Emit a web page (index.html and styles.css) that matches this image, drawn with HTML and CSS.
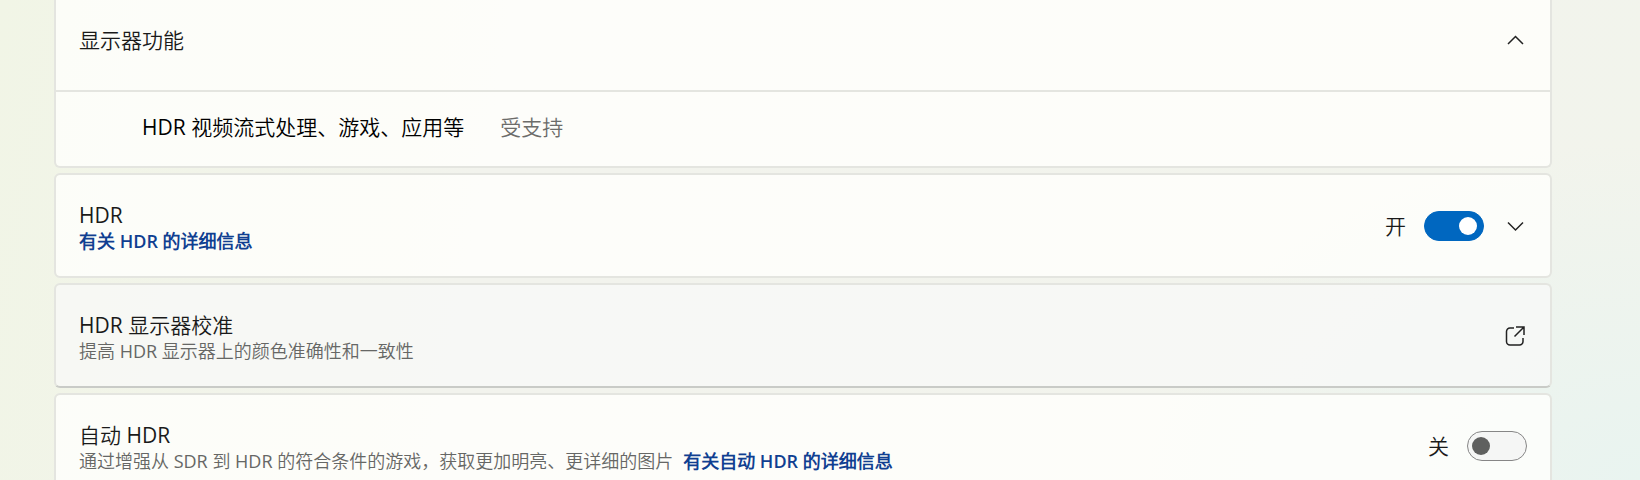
FILE: index.html
```html
<!DOCTYPE html>
<html lang="zh-CN">
<head>
    <meta charset="UTF-8">
    <meta name="viewport" content="width=device-width, initial-scale=1.0">
    <title>HDR</title>
    <link rel="stylesheet" href="styles.css">
</head>
<body>
<main class="settings">
    <section class="card card-top">
        <button class="row expander" type="button" aria-expanded="true">
            <span class="title">显示器功能</span>
            <svg class="icon" viewBox="0 0 22 22" aria-hidden="true">
                <path d="M3 15 L10.500 7.500 L18 15"/>
            </svg>
        </button>
        <div class="feature">
            <span class="feature-name">HDR 视频流式处理、游戏、应用等</span>
            <span class="feature-value">受支持</span>
        </div>
    </section>

    <section class="card row">
        <div class="text">
            <label class="title" for="hdr">HDR</label>
            <a class="link" href="#">有关 HDR 的详细信息</a>
        </div>
        <div class="controls">
            <label class="state" for="hdr">开</label>
            <input class="toggle" type="checkbox" role="switch" id="hdr" checked>
            <button class="chevron" type="button" aria-labelledby="hdr">
                <svg class="icon" viewBox="0 0 22 22" aria-hidden="true">
                    <path d="M3 7.500 L10.500 15 L18 7.500"/>
                </svg>
            </button>
        </div>
    </section>

    <button class="card row card-link" type="button">
        <span class="text">
            <span class="title">HDR 显示器校准</span>
            <span class="desc">提高 HDR 显示器上的颜色准确性和一致性</span>
        </span>
        <svg class="icon" viewBox="0 0 22 22" aria-hidden="true">
            <path d="M9 3 H5 A3.500 3.500 0 0 0 1.500 6.500 V16.500 A3.500 3.500 0 0 0 5 20 H14.500 A3.500 3.500 0 0 0 18 16.500 V13"/>
            <path d="M11 2 H19 V10 M19 2 L9.500 11.500"/>
        </svg>
    </button>

    <section class="card row">
        <div class="text">
            <label class="title" for="auto-hdr">自动 HDR</label>
            <div class="desc">
                <span>通过增强从 SDR 到 HDR 的符合条件的游戏，获取更加明亮、更详细的图片</span>
                <a class="link" href="#">有关自动 HDR 的详细信息</a>
            </div>
        </div>
        <div class="controls">
            <label class="state" for="auto-hdr">关</label>
            <input class="toggle" type="checkbox" role="switch" id="auto-hdr">
        </div>
    </section>
</main>
</body>
</html>
```
FILE: styles.css
```css
* {
    box-sizing: border-box;
}

body {
    margin: 0;
    height: 100vh;
    overflow: hidden;
    font-family: "Open Sans", "Noto Sans CJK SC DemiLight", "Noto Sans CJK SC", sans-serif;
    font-size: 21px;
    line-height: 28px;
    color: #1a1a1a;
    background:
        radial-gradient(ellipse 30% 70% at 100% 100%, #e9f4f0, rgba(233, 244, 240, 0)),
        linear-gradient(100deg, #f1f5e6 0%, #f2f3ed 30%, #f2f4ec 100%);
}

button {
    margin: 0;
    padding: 0;
    border: none;
    background: none;
    font: inherit;
    color: inherit;
    text-align: left;
}

.settings {
    display: flex;
    flex-direction: column;
    gap: 5px;
    padding: 0 88px 0 54px;
}

.card {
    border: 2px solid #e4e5e0;
    border-radius: 6px;
    background: rgba(255, 255, 253, 0.8);
    background-clip: padding-box;
}

.row {
    display: flex;
    justify-content: space-between;
    align-items: center;
    width: 100%;
    min-height: 105px;
    padding: 0 23px;
}

/* Continues above the scrolled view */
.card-top {
    border-top: none;
    border-radius: 0 0 6px 6px;
}

.expander {
    min-height: 90px;
    padding-bottom: 11px;
}

.feature {
    display: flex;
    align-items: center;
    gap: 36px;
    min-height: 76px;
    padding: 0 86px 5px;
    border-top: 2px solid #e4e5e0;
    color: #000;
}

.feature-value {
    color: #6c6c6a;
}

.text {
    display: flex;
    flex-direction: column;
    align-items: flex-start;
    padding-top: 3px;
}

.desc,
.link {
    font-size: 18px;
    line-height: 24px;
}

.desc {
    display: flex;
    flex-wrap: wrap;
    gap: 0 10px;
    color: #666765;
}

.link {
    font-weight: 600;
    color: #103f91;
    text-decoration: none;
}

.card-link {
    background: rgba(249, 249, 249, 0.7);
    background-clip: padding-box;
    border-bottom-color: #c9cbc7;
}

.controls {
    display: flex;
    align-items: center;
}

.state {
    margin-right: 18px;
}

.toggle {
    appearance: none;
    display: flex;
    align-items: center;
    width: 60px;
    height: 30px;
    margin: 0;
    padding: 0 4px;
    border: 1px solid #868686;
    border-radius: 15px;
    background: #f5f6f5;
}

.toggle::before {
    content: "";
    width: 18px;
    height: 18px;
    border-radius: 50%;
    background: #5f605f;
}

.toggle:checked {
    justify-content: flex-end;
    padding: 0 6px;
    border-color: #0067c0;
    background: #0067c0;
}

.toggle:checked::before {
    background: #fff;
}

.chevron {
    margin-left: 21px;
}

.icon {
    display: block;
    flex: none;
    width: 22px;
    height: 22px;
    fill: none;
    stroke: #222;
    stroke-width: 1.5;
}
```
